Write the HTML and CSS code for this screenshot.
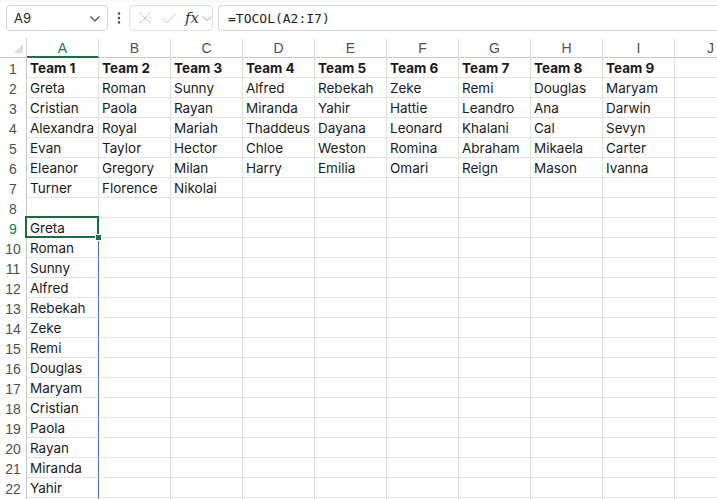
FILE: index.html
```html
<!DOCTYPE html>
<html>
<head>
<meta charset="utf-8">
<link rel="stylesheet" href="styles.css">
</head>
<body>
<div class="fbar">
  <div class="namebox">
    <span>A9</span>
    <svg class="chev" width="12" height="8" viewBox="0 0 12 8"><path d="M1.5 1.5 L6 6 L10.5 1.5" fill="none" stroke="#424242" stroke-width="1.1"/></svg>
  </div>
  <div class="dots">
    <svg width="4" height="14" viewBox="0 0 4 14"><circle cx="2" cy="2.5" r="1.2" fill="#424242"/><circle cx="2" cy="7" r="1.2" fill="#424242"/><circle cx="2" cy="11.5" r="1.2" fill="#424242"/></svg>
  </div>
  <div class="fxbox">
    <svg width="16" height="16" viewBox="0 0 16 16"><path d="M2.5 2.5 L13.5 13.5 M13.5 2.5 L2.5 13.5" stroke="#c8c8c8" stroke-width="1" fill="none"/></svg>
    <svg width="16" height="16" viewBox="0 0 16 16"><path d="M1.5 8.5 L6 13 L14.5 3.5" stroke="#c8c8c8" stroke-width="1" fill="none"/></svg>
    <span class="fx">fx</span>
    <svg class="chev2" width="10" height="7" viewBox="0 0 10 7"><path d="M1 1.5 L5 5.5 L9 1.5" fill="none" stroke="#9a9a9a" stroke-width="1"/></svg>
  </div>
  <div class="formula">=TOCOL(A2:I7)</div>
</div>
<div class="sheet">
  <div class="corner"><span class="tri"></span></div>
  <div class="ch selc">A</div><div class="ch">B</div><div class="ch">C</div><div class="ch">D</div><div class="ch">E</div><div class="ch">F</div><div class="ch">G</div><div class="ch">H</div><div class="ch">I</div><div class="ch">J</div>

  <div class="rh">1</div><div class="c b">Team 1</div><div class="c b">Team 2</div><div class="c b">Team 3</div><div class="c b">Team 4</div><div class="c b">Team 5</div><div class="c b">Team 6</div><div class="c b">Team 7</div><div class="c b">Team 8</div><div class="c b">Team 9</div><div class="c"></div>
  <div class="rh">2</div><div class="c">Greta</div><div class="c">Roman</div><div class="c">Sunny</div><div class="c">Alfred</div><div class="c">Rebekah</div><div class="c">Zeke</div><div class="c">Remi</div><div class="c">Douglas</div><div class="c">Maryam</div><div class="c"></div>
  <div class="rh">3</div><div class="c">Cristian</div><div class="c">Paola</div><div class="c">Rayan</div><div class="c">Miranda</div><div class="c">Yahir</div><div class="c">Hattie</div><div class="c">Leandro</div><div class="c">Ana</div><div class="c">Darwin</div><div class="c"></div>
  <div class="rh">4</div><div class="c">Alexandra</div><div class="c">Royal</div><div class="c">Mariah</div><div class="c">Thaddeus</div><div class="c">Dayana</div><div class="c">Leonard</div><div class="c">Khalani</div><div class="c">Cal</div><div class="c">Sevyn</div><div class="c"></div>
  <div class="rh">5</div><div class="c">Evan</div><div class="c">Taylor</div><div class="c">Hector</div><div class="c">Chloe</div><div class="c">Weston</div><div class="c">Romina</div><div class="c">Abraham</div><div class="c">Mikaela</div><div class="c">Carter</div><div class="c"></div>
  <div class="rh">6</div><div class="c">Eleanor</div><div class="c">Gregory</div><div class="c">Milan</div><div class="c">Harry</div><div class="c">Emilia</div><div class="c">Omari</div><div class="c">Reign</div><div class="c">Mason</div><div class="c">Ivanna</div><div class="c"></div>
  <div class="rh">7</div><div class="c">Turner</div><div class="c">Florence</div><div class="c">Nikolai</div><div class="c"></div><div class="c"></div><div class="c"></div><div class="c"></div><div class="c"></div><div class="c"></div><div class="c"></div>
  <div class="rh">8</div><div class="c"></div><div class="c"></div><div class="c"></div><div class="c"></div><div class="c"></div><div class="c"></div><div class="c"></div><div class="c"></div><div class="c"></div><div class="c"></div>
  <div class="rh selr">9</div><div class="c sel">Greta<span class="handle"></span></div><div class="c"></div><div class="c"></div><div class="c"></div><div class="c"></div><div class="c"></div><div class="c"></div><div class="c"></div><div class="c"></div><div class="c"></div>
  <div class="rh">10</div><div class="c spill">Roman</div><div class="c"></div><div class="c"></div><div class="c"></div><div class="c"></div><div class="c"></div><div class="c"></div><div class="c"></div><div class="c"></div><div class="c"></div>
  <div class="rh">11</div><div class="c spill">Sunny</div><div class="c"></div><div class="c"></div><div class="c"></div><div class="c"></div><div class="c"></div><div class="c"></div><div class="c"></div><div class="c"></div><div class="c"></div>
  <div class="rh">12</div><div class="c spill">Alfred</div><div class="c"></div><div class="c"></div><div class="c"></div><div class="c"></div><div class="c"></div><div class="c"></div><div class="c"></div><div class="c"></div><div class="c"></div>
  <div class="rh">13</div><div class="c spill">Rebekah</div><div class="c"></div><div class="c"></div><div class="c"></div><div class="c"></div><div class="c"></div><div class="c"></div><div class="c"></div><div class="c"></div><div class="c"></div>
  <div class="rh">14</div><div class="c spill">Zeke</div><div class="c"></div><div class="c"></div><div class="c"></div><div class="c"></div><div class="c"></div><div class="c"></div><div class="c"></div><div class="c"></div><div class="c"></div>
  <div class="rh">15</div><div class="c spill">Remi</div><div class="c"></div><div class="c"></div><div class="c"></div><div class="c"></div><div class="c"></div><div class="c"></div><div class="c"></div><div class="c"></div><div class="c"></div>
  <div class="rh">16</div><div class="c spill">Douglas</div><div class="c"></div><div class="c"></div><div class="c"></div><div class="c"></div><div class="c"></div><div class="c"></div><div class="c"></div><div class="c"></div><div class="c"></div>
  <div class="rh">17</div><div class="c spill">Maryam</div><div class="c"></div><div class="c"></div><div class="c"></div><div class="c"></div><div class="c"></div><div class="c"></div><div class="c"></div><div class="c"></div><div class="c"></div>
  <div class="rh">18</div><div class="c spill">Cristian</div><div class="c"></div><div class="c"></div><div class="c"></div><div class="c"></div><div class="c"></div><div class="c"></div><div class="c"></div><div class="c"></div><div class="c"></div>
  <div class="rh">19</div><div class="c spill">Paola</div><div class="c"></div><div class="c"></div><div class="c"></div><div class="c"></div><div class="c"></div><div class="c"></div><div class="c"></div><div class="c"></div><div class="c"></div>
  <div class="rh">20</div><div class="c spill">Rayan</div><div class="c"></div><div class="c"></div><div class="c"></div><div class="c"></div><div class="c"></div><div class="c"></div><div class="c"></div><div class="c"></div><div class="c"></div>
  <div class="rh">21</div><div class="c spill">Miranda</div><div class="c"></div><div class="c"></div><div class="c"></div><div class="c"></div><div class="c"></div><div class="c"></div><div class="c"></div><div class="c"></div><div class="c"></div>
  <div class="rh">22</div><div class="c spill">Yahir</div><div class="c"></div><div class="c"></div><div class="c"></div><div class="c"></div><div class="c"></div><div class="c"></div><div class="c"></div><div class="c"></div><div class="c"></div>
  <div class="rh"></div><div class="c spill"></div><div class="c"></div><div class="c"></div><div class="c"></div><div class="c"></div><div class="c"></div><div class="c"></div><div class="c"></div><div class="c"></div><div class="c"></div>
</div>
</body>
</html>
```

FILE: styles.css
```css
* { box-sizing: border-box; }
html, body { margin: 0; padding: 0; }
body {
  width: 717px;
  height: 499px;
  overflow: hidden;
  background: #ffffff;
  font-family: "Inter", "Liberation Sans", sans-serif;
  color: #1f1f1f;
}
.fbar {
  display: flex;
  align-items: center;
  height: 38px;
  padding: 5px 0 7px 6px;
  background: linear-gradient(#fbf5f6 0px, #ffffff 4px);
  width: 717px;
  overflow: hidden;
}
.namebox {
  display: flex;
  align-items: center;
  justify-content: space-between;
  width: 102px;
  height: 26px;
  border: 1px solid #d6d6d6;
  border-radius: 4px;
  padding: 0 6px 0 7px;
  font-size: 13px;
  color: #242424;
}
.chev { margin-top: 1px; }
.dots {
  width: 21px;
  display: flex;
  justify-content: center;
  align-items: center;
}
.fxbox {
  display: flex;
  align-items: center;
  width: 84px;
  height: 26px;
  border: 1px solid #e0e0e0;
  border-radius: 4px;
  padding: 0 0 0 7px;
  gap: 8px;
}
.fx {
  font-family: "DejaVu Serif", "Liberation Serif", serif;
  font-style: italic;
  font-size: 15px;
  color: #333;
  margin-left: 0;
  margin-right: -5px;
}
.formula {
  margin-left: 5px;
  flex: 1;
  height: 26px;
  border: 1px solid #d6d6d6;
  border-right: none;
  border-radius: 4px 0 0 4px;
  padding: 0 0 0 9px;
  display: flex;
  align-items: center;
  font-family: "DejaVu Sans Mono", "Liberation Mono", monospace;
  font-size: 13px;
  color: #1f1f1f;
}
.sheet {
  display: grid;
  grid-template-columns: 27px repeat(10, 72px);
  grid-template-rows: 20px;
  grid-auto-rows: 20px;
  width: 717px;
  overflow: hidden;
}
.corner {
  position: relative;
  border-right: 1px solid #d4d4d4;
  border-bottom: 1px solid #c8c8c8;
}
.tri {
  position: absolute;
  right: 3px;
  bottom: 4px;
  width: 0;
  height: 0;
  border-left: 9px solid transparent;
  border-bottom: 9px solid #dcdcdc;
}
.ch {
  display: flex;
  align-items: center;
  justify-content: center;
  border-right: 1px solid #e6e6e6;
  border-bottom: 1px solid #c8c8c8;
  font-family: "Liberation Sans", sans-serif;
  font-size: 14px;
  color: #505050;
  padding-top: 1px;
}
.ch.selc {
  color: #137b46;
  border-bottom: 2px solid #1c6e45;
}
.rh {
  display: flex;
  align-items: center;
  justify-content: center;
  border-right: 1px solid #c8c8c8;
  font-family: "Liberation Sans", sans-serif;
  font-size: 14px;
  color: #505050;
  padding-top: 1px;
}
.rh.selr { color: #137b46; }
.c {
  border-right: 1px solid #e3e3e3;
  border-bottom: 1px solid #e3e3e3;
  padding: 1px 0 0 3px;
  font-size: 13.5px;
  line-height: 19px;
  white-space: nowrap;
  color: #1a1a1a;
}
.c.b { font-weight: 700; }
.c.sel {
  position: relative;
}
.c.sel::after {
  content: "";
  position: absolute;
  left: -2px;
  top: -2px;
  right: -1px;
  bottom: -1px;
  border: 2px solid #1d6b45;
}
.handle {
  position: absolute;
  right: -4px;
  bottom: -4px;
  width: 7px;
  height: 7px;
  background: #1d6b45;
  border: 1px solid #ffffff;
  z-index: 2;
}
.c.spill {
  border-right: 1px solid #4f6fa8;
}
```
